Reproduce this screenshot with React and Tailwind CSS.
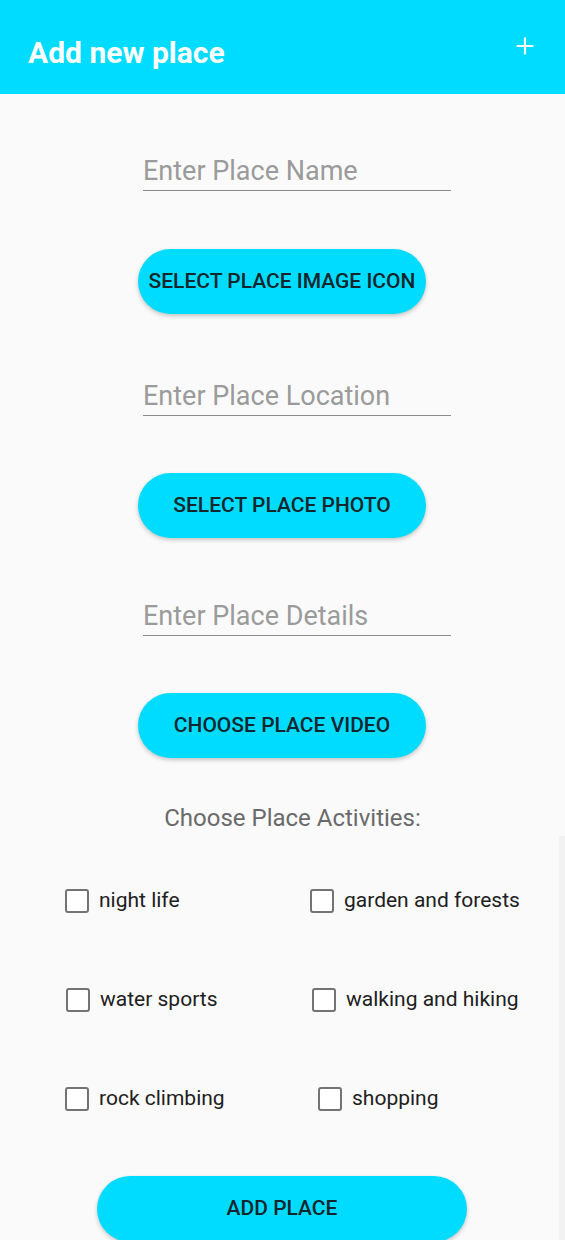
import { Plus } from "lucide-react";

const font = { fontFamily: "Roboto, 'Liberation Sans', sans-serif" };

function Field({ label, className }) {
  return (
    <div className={"ml-[143px] w-[308px] h-[41px] pt-[5px] border-b-[1.5px] border-[#8a8a8a] " + className}>
      <div className="text-[27px] leading-[32px] text-[#9b9b9b]">{label}</div>
    </div>
  );
}

function PillButton({ children, className }) {
  return (
    <button
      className={
        "h-[65px] rounded-full bg-[#00dcff] text-[#14262d] text-[21px] font-medium shadow-[0_2px_4px_rgba(0,0,0,0.22)] flex items-center justify-center " +
        className
      }
    >
      {children}
    </button>
  );
}

function Check({ label, className }) {
  return (
    <div className={"flex items-center gap-[10px] h-[30px] " + className}>
      <span className="w-[24px] h-[24px] rounded-[3px] border-[2.5px] border-[#737373] bg-white" />
      <span className="text-[21px] text-[#202020]">{label}</span>
    </div>
  );
}

export default function App() {
  return (
    <div className="relative h-[1240px] overflow-hidden bg-[#fafafa]" style={font}>
      <header className="h-[94px] bg-[#00dcff] flex items-start justify-between pl-[28px] pr-[27px] pt-[34px]">
        <h1 className="text-[30px] leading-[38px] font-bold text-white">Add new place</h1>
        <Plus className="text-white mt-[-1px]" size={26} strokeWidth={2} />
      </header>

      <Field label="Enter Place Name" className="mt-[56px]" />
      <PillButton className="mt-[58px] ml-[138px] w-[288px]">SELECT PLACE IMAGE ICON</PillButton>

      <Field label="Enter Place Location" className="mt-[61px]" />
      <PillButton className="mt-[57px] ml-[138px] w-[288px]">SELECT PLACE PHOTO</PillButton>

      <Field label="Enter Place Details" className="mt-[57px]" />
      <PillButton className="mt-[57px] ml-[138px] w-[288px]">CHOOSE PLACE VIDEO</PillButton>

      <p className="mt-[45px] text-center text-[24px] leading-[30px] text-[#6a6a6a] pl-[20px]">
        Choose Place Activities:
      </p>

      <div className="mt-[53px] grid grid-cols-[245px_1fr] gap-y-[69px] pl-[65px]">
        <Check label="night life" />
        <Check label="garden and forests" />
        <Check label="water sports" className="ml-[1px]" />
        <Check label="walking and hiking" className="ml-[2px]" />
        <Check label="rock climbing" />
        <Check label="shopping" className="ml-[8px]" />
      </div>

      <PillButton className="mt-[62px] ml-[97px] w-[370px] h-[66px]">ADD PLACE</PillButton>

      <div className="absolute right-0 top-[836px] bottom-0 w-[6px] bg-[#f2f2f2]" />
    </div>
  );
}
